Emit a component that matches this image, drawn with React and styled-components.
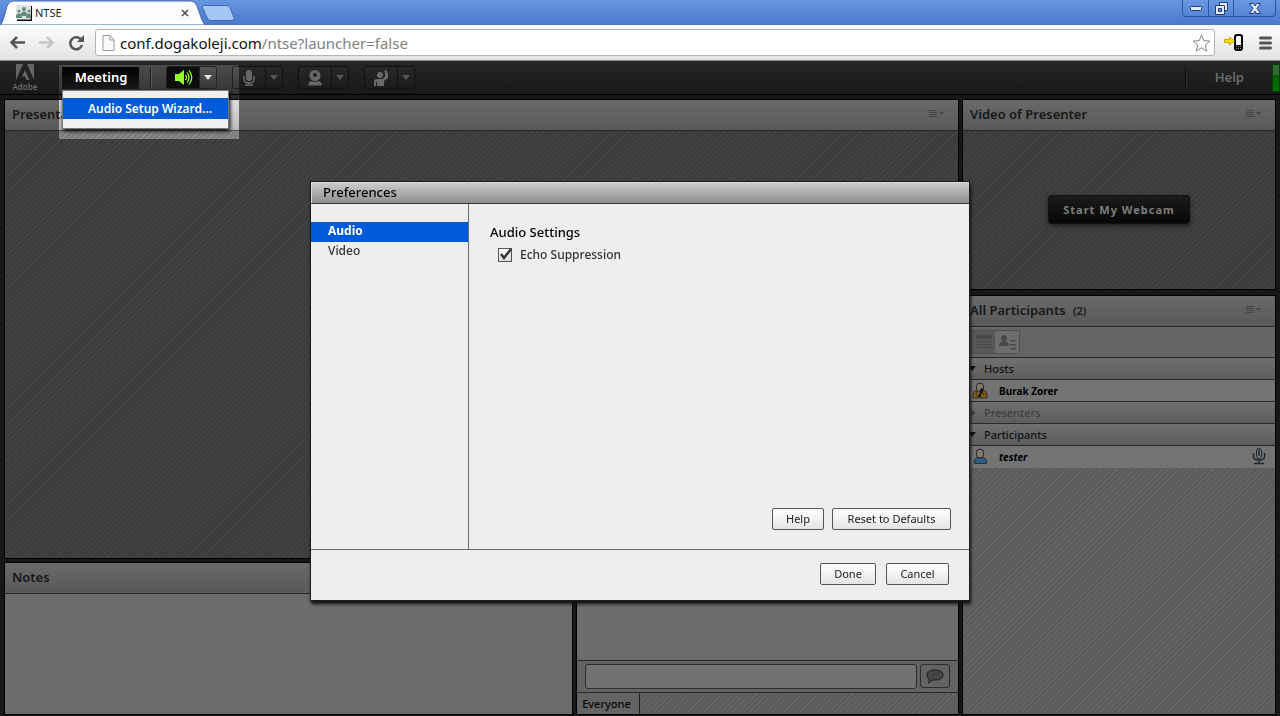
import React from 'react';
import styled, { createGlobalStyle, css } from 'styled-components';

const Global = createGlobalStyle`
  * { box-sizing: border-box; }
  body { margin: 0; background: #171717; font-family: "Noto Sans", "Open Sans", sans-serif; font-size: 12px; }
  button, input { font-family: inherit; margin: 0; }
  svg { display: block; flex: none; }
`;

const darkHatch = 'repeating-linear-gradient(135deg, #3c3c3c 0 3px, #454545 3px 4px)';
const lightHatch = 'repeating-linear-gradient(135deg, #5c5c5c 0 3px, #676767 3px 4px)';

const Page = styled.div`
  position: relative;
  min-height: 100vh;
  display: flex;
  flex-direction: column;
  overflow: hidden;
`;

const TabStrip = styled.div`
  height: 25px;
  display: flex;
  justify-content: space-between;
  background: linear-gradient(#6796e0, #4a78cd);
`;
const Tabs = styled.div`
  display: flex;
  align-items: stretch;
`;
const Tab = styled.div`
  position: relative;
  width: 201px;
  padding: 0 12px 0 16px;
  display: flex;
  align-items: center;
  gap: 3px;
  font-size: 11px;
  color: #222;
`;
const TabShape = styled.svg`
  position: absolute;
  inset: 0;
`;
const TabLabel = styled.span`
  position: relative;
  flex: 1;
`;
const Layered = styled.span`
  position: relative;
`;
const PlainButton = styled.button`
  position: relative;
  border: 0;
  padding: 0;
  background: none;
  display: flex;
  align-items: center;
  justify-content: center;
`;
const WindowControls = styled.div`
  display: flex;
  height: 17px;
  margin-right: 4px;
  border: 1px solid #2e549f;
  border-top: 0;
  border-radius: 0 0 4px 4px;
  background: linear-gradient(#6a98e2, #5684d5);
`;
const WindowButton = styled(PlainButton)`
  width: ${(p) => (p.$wide ? 42 : 25)}px;
  & + & { border-left: 1px solid #2e549f; }
`;

const AddressBar = styled.div`
  height: 36px;
  display: flex;
  align-items: center;
  padding: 0 8px;
  gap: 9px;
  background: linear-gradient(#fdfdfd, #e2e2e2);
  border-bottom: 1px solid #8d8d8d;
`;
const NavButtons = styled.div`
  display: flex;
  gap: 10px;
`;
const UrlBox = styled.div`
  flex: 1;
  height: 27px;
  display: flex;
  align-items: center;
  gap: 5px;
  padding: 0 3px 0 6px;
  background: #fff;
  border: 1px solid #b4b4b4;
  border-radius: 3px;
`;
const Url = styled.div`
  flex: 1;
  font-size: 15px;
  line-height: 20px;
  color: #808080;
  b { font-weight: 400; color: #111; }
`;
const Extras = styled.div`
  display: flex;
  gap: 15px;
  align-items: center;
`;

const AppBar = styled.header`
  position: relative;
  height: 34px;
  display: flex;
  align-items: center;
  background: linear-gradient(#252525, #191919);
  border-bottom: 1px solid #000;
`;
const Brand = styled.div`
  width: 50px;
  height: 28px;
  margin-right: 12px;
  display: flex;
  flex-direction: column;
  align-items: center;
  color: #6a6a6a;
  font-size: 8px;
  line-height: 11px;
  font-weight: 600;
`;
const MeetingButton = styled(PlainButton)`
  width: 77px;
  height: 22px;
  padding: 0 0 2px 1px;
  color: #858585;
  font-size: 13px;
  font-weight: 600;
  background: linear-gradient(#000, #0c0c0c);
`;
const Divider = styled.span`
  width: 2px;
  height: 20px;
  background: #0d0d0d;
  border-right: 1px solid #2c2c2c;
`;
const ToolGroup = styled.div`
  flex: 1;
  display: flex;
  gap: 15px;
  padding-left: 14px;
`;
const MenuGroup = styled.div`
  display: flex;
  align-items: center;
  gap: 11px;
`;
const StatusGroup = styled.div`
  display: flex;
  align-items: center;
  gap: 28px;
`;
const SplitButton = styled.div`
  display: flex;
  height: 23px;
  border: 1px solid #101010;
  border-radius: 3px;
  background: linear-gradient(#282828, #1b1b1b);
`;
const ToolButton = styled(PlainButton)`
  width: 32px;
  color: #686868;
  ${(p) => p.$on && css`background: #060606; color: #468a13;`}
`;
const ArrowButton = styled(PlainButton)`
  width: 17px;
  border-left: 1px solid #101010;
  color: ${(p) => (p.$on ? '#6c6c6c' : '#555')};
`;
const HelpMenu = styled(PlainButton)`
  padding-bottom: 2px;
  color: #6b6b6b;
  font-size: 13px;
  font-weight: 600;
`;
const Signal = styled.span`
  width: 8px;
  height: 28px;
  border: 1px solid #033c03;
  background: linear-gradient(#346834 0 40%, #006000 40%, #007000);
`;

const Spotlight = styled.div`
  position: absolute;
  left: 59px;
  top: 65px;
  width: 180px;
  height: 74px;
  padding: 25px 10px 10px 3px;
  backdrop-filter: brightness(2.1);
`;
const Menu = styled.div`
  height: 39px;
  padding: 7px 0;
  background: #f0f0f0;
  border: 1px solid #777;
  box-shadow: 1px 2px 4px #000;
`;
const MenuItem = styled.button`
  width: 100%;
  height: 21px;
  border: 0;
  padding: 0 0 1px 25px;
  background: #005bd8;
  color: #fff;
  font-size: 12px;
  font-weight: 600;
  text-align: left;
  white-space: nowrap;
`;

const Workspace = styled.main`
  flex: 1;
  display: grid;
  grid-template-columns: 1fr 314px;
  gap: 3px;
  padding: 4px 4px 1px 4px;
`;
const Column = styled.div`
  display: flex;
  flex-direction: column;
  gap: ${(p) => p.$gap}px;
`;
const BottomRow = styled.div`
  height: 153px;
  display: grid;
  grid-template-columns: 569fr 383fr;
  gap: 3px;
`;
const Pod = styled.section`
  display: flex;
  flex-direction: column;
  border: 1px solid #000;
  background: ${(p) => p.$fill};
  ${(p) => (p.$height ? css`height: ${p.$height}px;` : css`flex: 1;`)}
`;
const PodHeader = styled.div`
  height: 31px;
  display: flex;
  align-items: center;
  justify-content: space-between;
  padding: 0 14px 2px 7px;
  background: linear-gradient(#6a6a6a, #595959);
  border-bottom: 1px solid #262626;
  color: #171717;
`;
const PodTitle = styled.h2`
  margin: 0;
  font-size: 13px;
  font-weight: 600;
  small { font-size: 11px; margin-left: 4px; }
`;
const Center = styled.div`
  flex: 1;
  display: flex;
  justify-content: center;
  padding-top: 64px;
`;
const WebcamButton = styled.button`
  width: 142px;
  height: 29px;
  padding: 0 0 1px 0;
  border: 1px solid #111;
  border-radius: 3px;
  background: linear-gradient(#1b1b1b, #080808);
  box-shadow: 0 2px 4px #222;
  color: #7d7d7d;
  font-size: 11px;
  font-weight: 700;
  letter-spacing: 1px;
`;

const ViewBar = styled.div`
  height: 31px;
  padding: 3px 7px;
  background: #656565;
  border-bottom: 1px solid #262626;
`;
const ViewSwitch = styled.div`
  display: inline-flex;
  height: 24px;
  border: 1px solid #505050;
  border-radius: 2px;
`;
const ViewButton = styled(PlainButton)`
  width: 24px;
  color: #484848;
  background: ${(p) => (p.$on ? '#585858' : '#6e6e6e')};
`;
const GroupRow = styled.div`
  height: 22px;
  display: flex;
  align-items: center;
  gap: 8px;
  padding-left: 5px;
  font-size: 11px;
  font-weight: 500;
  color: ${(p) => (p.$muted ? '#3f3f3f' : '#111')};
  background: linear-gradient(#707070, #5d5d5d);
  border-bottom: 1px solid #292929;
`;
const PersonRow = styled.div`
  height: 22px;
  display: flex;
  align-items: center;
  gap: 11px;
  padding: 0 9px;
  color: #000;
  background: #737373;
  border-bottom: 1px solid ${(p) => (p.$last ? '#737373' : '#292929')};
`;
const PersonName = styled.span`
  flex: 1;
  font-size: 10px;
  font-weight: 700;
  font-style: ${(p) => (p.$italic ? 'italic' : 'normal')};
`;

const ChatLog = styled.div`
  flex: 1;
  background: #6c6c6c;
`;
const ChatEntry = styled.form`
  height: 33px;
  display: flex;
  gap: 3px;
  padding: 3px 8px;
  background: #636363;
  border-top: 1px solid #262626;
  border-bottom: 1px solid #262626;
`;
const ChatInput = styled.input`
  flex: 1;
  min-width: 0;
  height: 25px;
  border: 1px solid #2d2d2d;
  border-radius: 3px;
  background: #727272;
`;
const SendButton = styled(PlainButton)`
  width: 30px;
  height: 24px;
  border: 1px solid #2d2d2d;
  border-radius: 3px;
`;
const ChatTabs = styled.div`
  height: 21px;
  display: flex;
  background: ${lightHatch};
`;
const ChatTab = styled(PlainButton)`
  width: 63px;
  padding-right: 3px;
  background: #646464;
  border-right: 1px solid #222;
  color: #080808;
  font-size: 11px;
  font-weight: 500;
`;

const Overlay = styled.div`
  position: absolute;
  inset: 0;
  display: flex;
  justify-content: center;
  align-items: flex-start;
  padding-top: 181px;
`;
const Dialog = styled.div`
  width: 660px;
  border: 1px solid #1c1c1c;
  background: #eee;
  box-shadow: 1px 3px 3px #111;
`;
const DialogTitle = styled.h1`
  height: 22px;
  margin: 0;
  padding-left: 12px;
  background: linear-gradient(#cecece, #8e8e8e);
  border-bottom: 1px solid #333;
  box-shadow: inset 1px 1px #ddd;
  color: #000;
  font-size: 13px;
  line-height: 20px;
  font-weight: 500;
`;
const DialogBody = styled.div`
  height: 346px;
  display: grid;
  grid-template-columns: 158px 1fr;
  border-bottom: 1px solid #6b6b6b;
`;
const SideList = styled.nav`
  padding-top: 18px;
  border-right: 1px solid #6b6b6b;
`;
const SideItem = styled.a`
  display: block;
  height: 20px;
  padding-left: 17px;
  line-height: 18px;
  font-size: 12px;
  text-decoration: none;
  font-weight: ${(p) => (p.$on ? 700 : 500)};
  color: ${(p) => (p.$on ? '#fff' : '#333')};
  background: ${(p) => (p.$on ? '#005bd8' : 'none')};
`;
const Settings = styled.div`
  display: flex;
  flex-direction: column;
  padding: 18px 18px 19px 21px;
`;
const SettingsTitle = styled.h2`
  margin: 0;
  font-size: 13px;
  line-height: 20px;
  font-weight: 500;
  color: #000;
`;
const CheckLabel = styled.label`
  flex: 1;
  display: flex;
  align-items: flex-start;
  gap: 8px;
  padding: 4px 0 0 8px;
  font-size: 12px;
  line-height: 18px;
  font-weight: 500;
  color: #333;
`;
const CheckBox = styled.input`
  appearance: none;
  width: 14px;
  height: 14px;
  margin-top: 2px;
  border: 1px solid #555;
  background: linear-gradient(#fff, #ddd);
`;
const CheckWrap = styled.span`
  position: relative;
  display: flex;
  svg { position: absolute; left: 0; top: 0; pointer-events: none; }
`;
const Buttons = styled.div`
  display: flex;
  justify-content: flex-end;
  gap: ${(p) => p.$gap}px;
`;
const DialogFooter = styled.div`
  height: 50px;
  padding: 13px 20px;
`;
const DialogButton = styled.button`
  width: ${(p) => p.$width}px;
  height: 22px;
  padding: 0 0 1px 0;
  border: 1px solid #555;
  border-radius: 2px;
  background: linear-gradient(#fff, #e4e4e4);
  color: #222;
  font-size: 11px;
  line-height: 18px;
  white-space: nowrap;
`;

const DownArrow = ({ width = 8, height = 5 }) => (
  <svg width={width} height={height} viewBox="0 0 8 5"><path d="M0 0h8L4 5z" fill="currentColor" /></svg>
);

const OptionsButton = () => (
  <PlainButton aria-label="Pod options">
    <svg width="15" height="8" viewBox="0 0 15 8" fill="none" stroke="#464646">
      <path d="M0 .5h8M0 2.500h8M0 4.500h8M0 6.500h8" />
      <path d="M10 2h5l-2.500 3z" fill="#464646" stroke="none" />
    </svg>
  </PlainButton>
);

const SpeakerIcon = () => (
  <svg width="19" height="17" viewBox="0 0 19 17" fill="currentColor">
    <path d="M1 5h4l5-4v15l-5-4H1z" />
    <path d="M11.500 6q2 2.500 0 5M13 3.500q4 5 0 10M15 1.500q5.500 7 0 14" fill="none" stroke="currentColor" strokeWidth="1.200" />
  </svg>
);
const MicIcon = () => (
  <svg width="12" height="16" viewBox="0 0 12 16" fill="none" stroke="currentColor">
    <rect x="3" y="0" width="6" height="11" rx="3" fill="currentColor" stroke="none" />
    <path d="M1 6v3q0 4 5 4t5-4V6M6 12v3M2 15h8" strokeWidth="1.500" />
  </svg>
);
const CamIcon = () => (
  <svg width="14" height="16" viewBox="0 0 14 16">
    <path fillRule="evenodd" d="M7 0a5 5 0 1 1 0 11A5 5 0 0 1 7 0zm0 3a2 2 0 1 0 0 4 2 2 0 0 0 0-4zM3 11l4 1 4-1 2.500 2v2.500H.5V13z" fill="currentColor" />
  </svg>
);
const HandIcon = () => (
  <svg width="16" height="16" viewBox="0 0 16 16" fill="currentColor">
    <circle cx="7" cy="5" r="3" />
    <path d="M1 16v-4q0-3 3-3h5l3-2V3l-1-2q2-1.500 3 0l1 3v4l-4 3v5H4v-4H3v4z" />
  </svg>
);
const PersonIcon = ({ body, host }) => (
  <svg width="16" height="17" viewBox="0 0 16 17">
    <path d={host ? 'M1 16v-4q1-4 5-4h4q4 0 5 4v4z' : 'M2.500 15.500v-3q1-3 4-3h4q3 0 4 3v3z'} fill={body} stroke="#2c2c2c" />
    <rect x="4.500" y="1" width="7" height="9" rx="3.500" fill="#817a6e" stroke="#222" />
    {host && <path d="M8 7l3-1v5l-2 1v3H5l3-4z" fill="#161616" />}
    {host && <path d="M4.500 9.500L4 14M11.500 11l.5 3" stroke="#403010" />}
  </svg>
);

const tools = [
  { label: 'Speakers', icon: <SpeakerIcon />, on: true },
  { label: 'Microphone', icon: <MicIcon /> },
  { label: 'Webcam', icon: <CamIcon /> },
  { label: 'Raise hand', icon: <HandIcon /> },
];

function Browser() {
  return (
    <>
      <TabStrip>
        <Tabs>
          <Tab>
            <TabShape width="206" height="25" viewBox="0 0 206 25">
              <path d="M0 25Q2 24 4 17L7 6Q9 1 13 1h178q4 0 6 5l5 14q2 5 4 5z" fill="#fcfcfc" stroke="#4167ad" strokeWidth="1" />
            </TabShape>
            <Layered>
              <svg width="16" height="16" viewBox="0 0 16 16">
                <path d="M1 15.500h14.500V1" fill="none" stroke="#000" strokeWidth="2" />
                <rect width="15" height="14" fill="#dfe7e3" />
                <g fill="#648b7e"><circle cx="8" cy="4" r="2" /><circle cx="3" cy="6" r="1.500" /><circle cx="13" cy="6" r="1.500" /><path d="M5 11V8l3-2 3 2v3zM0 13v-3l3-2 3 2v3zM10 13v-3l3-2 2 2v3z" /></g>
              </svg>
            </Layered>
            <TabLabel>NTSE</TabLabel>
            <PlainButton aria-label="Close tab">
              <svg width="8" height="8" viewBox="0 0 8 8"><path d="M1 1l6 6M7 1L1 7" stroke="#555" strokeWidth="1.700" /></svg>
            </PlainButton>
          </Tab>
          <PlainButton aria-label="New tab">
            <svg width="34" height="25" viewBox="0 0 34 25"><path d="M1.500 7.500Q1 5.500 3 5.500h22q3 0 4 2l4 10q1 3-2 3H10q-3 0-4-3z" fill="#a5c7f7" stroke="#4266ad" /></svg>
          </PlainButton>
        </Tabs>
        <WindowControls>
          <WindowButton aria-label="Minimize">
            <svg width="12" height="5" viewBox="0 0 12 5"><rect x=".5" y=".5" width="11" height="4" rx="1" fill="#dfe9fa" stroke="#233f78" /></svg>
          </WindowButton>
          <WindowButton aria-label="Restore">
            <svg width="13" height="13" viewBox="0 0 13 13" fill="#dfe9fa" stroke="#233f78"><path d="M4.500.5h8v8h-8z" /><path d="M.5 3.500h9v9h-9z" /><path d="M3.500 6.500h3v3h-3z" fill="#5b88d6" /></svg>
          </WindowButton>
          <WindowButton $wide aria-label="Close">
            <svg width="12" height="11" viewBox="0 0 12 11"><path d="M.5.5h4L6 3 7.500.5h4l-3.500 5 3.500 5h-4L6 8l-1.500 2.500h-4l3.500-5z" fill="#dfe9fa" stroke="#233f78" /></svg>
          </WindowButton>
        </WindowControls>
      </TabStrip>
      <AddressBar>
        <NavButtons>
          <PlainButton aria-label="Back">
            <svg width="19" height="16" viewBox="0 0 19 16"><path d="M9 2L3.500 7.500 9 13M3.500 7.500H17" fill="none" stroke="#555" strokeWidth="2.500" /></svg>
          </PlainButton>
          <PlainButton aria-label="Forward">
            <svg width="19" height="16" viewBox="0 0 19 16"><path d="M10 2l5.500 5.500L10 13M15.500 7.500H2" fill="none" stroke="#c6c6c6" strokeWidth="2.500" /></svg>
          </PlainButton>
          <PlainButton aria-label="Reload">
            <svg width="20" height="18" viewBox="0 0 20 18"><path d="M16 11a6 6 0 1 1-1.500-6" fill="none" stroke="#555" strokeWidth="2.500" /><path d="M18 1v7h-7z" fill="#555" /></svg>
          </PlainButton>
        </NavButtons>
        <UrlBox>
          <svg width="13" height="16" viewBox="0 0 13 16"><path d="M1 .5h7L12 5v10.500H1zM8 .5V5h4" fill="#fafafa" stroke="#999" /></svg>
          <Url><b>conf.dogakoleji.com</b>/ntse?launcher=false</Url>
          <PlainButton aria-label="Bookmark">
            <svg width="19" height="18" viewBox="0 0 19 18"><path d="M9.500 1l2.300 5.700 6.200.4-4.800 4 1.600 6-5.300-3.300L4.200 17l1.600-6L1 7.100l6.200-.4z" fill="#fff" stroke="#858585" /></svg>
          </PlainButton>
        </UrlBox>
        <Extras>
          <PlainButton aria-label="Send to phone">
            <svg width="20" height="18" viewBox="0 0 20 18">
              <rect x="11" y="1" width="7" height="15" rx="2" fill="#fff" stroke="#000" strokeWidth="2" />
              <path d="M11 11h7v5h-7z" /><path d="M12 12.500h5M12 14.500h5" stroke="#999" strokeDasharray="1 1" />
              <path d="M.5 5.500h5V3l5 4-5 4V8.500h-5z" fill="#ffdf14" stroke="#c9a60a" />
            </svg>
          </PlainButton>
          <PlainButton aria-label="Browser menu">
            <svg width="13" height="14" viewBox="0 0 13 14"><path d="M1.500 2h10M1.500 7h10M1.500 12h10" stroke="#555" strokeWidth="3" strokeLinecap="round" /></svg>
          </PlainButton>
        </Extras>
      </AddressBar>
    </>
  );
}

function Participants() {
  return (
    <Pod $fill={lightHatch}>
      <PodHeader><PodTitle>All Participants <small>(2)</small></PodTitle><OptionsButton /></PodHeader>
      <ViewBar>
        <ViewSwitch>
          <ViewButton $on aria-label="Attendee view">
            <svg width="17" height="16" viewBox="0 0 17 16" fill="currentColor"><path d="M1 1h16v4H1zM1 7h2v1H1zM4 7h13v1H4zM1 10h2v1H1zM4 10h13v1H4zM1 13h2v1H1zM4 13h13v1H4z" /></svg>
          </ViewButton>
          <ViewButton aria-label="Status view">
            <svg width="17" height="15" viewBox="0 0 17 15" fill="currentColor"><circle cx="5" cy="3" r="3" /><path d="M0 11q0-4 4-5h2q4 1 4 5zM11 5h6v1.500h-6zM11 9h6v1.500h-6zM11 13h6v1.500h-6z" /></svg>
          </ViewButton>
        </ViewSwitch>
      </ViewBar>
      <GroupRow><DownArrow />Hosts</GroupRow>
      <PersonRow><PersonIcon body="#856315" host /><PersonName>Burak Zorer</PersonName></PersonRow>
      <GroupRow $muted><svg width="8" height="8" viewBox="0 0 8 8"><path d="M3 0l5 4-5 4z" fill="#444" /></svg>Presenters</GroupRow>
      <GroupRow><DownArrow />Participants</GroupRow>
      <PersonRow $last>
        <PersonIcon body="#2f5c86" />
        <PersonName $italic>tester</PersonName>
        <svg width="14" height="17" viewBox="0 0 14 17" fill="none" stroke="#1c2730"><rect x="4.500" y=".5" width="5" height="10" rx="2.500" fill="#777" /><path d="M6 3h2M6 5h2M6 7h2M1.500 5v4q0 3 5.500 3t5.500-3V5M7 12v3M2 15.500h10" strokeWidth="1.500" /></svg>
      </PersonRow>
    </Pod>
  );
}

function Preferences() {
  return (
    <Dialog role="dialog" aria-labelledby="prefs-title">
      <DialogTitle id="prefs-title">Preferences</DialogTitle>
      <DialogBody>
        <SideList>
          <SideItem $on href="#audio">Audio</SideItem>
          <SideItem href="#video">Video</SideItem>
        </SideList>
        <Settings>
          <SettingsTitle>Audio Settings</SettingsTitle>
          <CheckLabel>
            <CheckWrap>
              <CheckBox type="checkbox" defaultChecked />
              <svg width="16" height="16" viewBox="0 0 16 16"><path d="M3 8l3 4L13 3" fill="none" stroke="#333" strokeWidth="2.500" /></svg>
            </CheckWrap>
            Echo Suppression
          </CheckLabel>
          <Buttons $gap={8}>
            <DialogButton $width={52}>Help</DialogButton>
            <DialogButton $width={119}>Reset to Defaults</DialogButton>
          </Buttons>
        </Settings>
      </DialogBody>
      <DialogFooter>
        <Buttons $gap={10}>
          <DialogButton $width={56}>Done</DialogButton>
          <DialogButton $width={63}>Cancel</DialogButton>
        </Buttons>
      </DialogFooter>
    </Dialog>
  );
}

export default function App() {
  return (
    <Page>
      <Global />
      <Browser />
      <AppBar>
        <Brand>
          <svg width="18" height="17" viewBox="0 0 18 17" fill="#666"><path d="M0 0h7L0 16zM11 0h7v16zM9 6l4.500 10h-3L9 12.500H6z" /></svg>
          Adobe
        </Brand>
        <MenuGroup>
          <MeetingButton>Meeting</MeetingButton>
          <Divider />
        </MenuGroup>
        <ToolGroup>
          {tools.map((t) => (
            <SplitButton key={t.label}>
              <ToolButton $on={t.on} aria-label={t.label}>{t.icon}</ToolButton>
              <ArrowButton $on={t.on} aria-label={`${t.label} options`}><DownArrow /></ArrowButton>
            </SplitButton>
          ))}
        </ToolGroup>
        <StatusGroup>
          <Divider />
          <HelpMenu>Help</HelpMenu>
          <Signal />
        </StatusGroup>
      </AppBar>
      <Workspace>
        <Column $gap={3}>
          <Pod $fill={darkHatch}>
            <PodHeader><PodTitle>Presentation</PodTitle><OptionsButton /></PodHeader>
          </Pod>
          <BottomRow>
            <Pod $fill="#6c6c6c"><PodHeader><PodTitle>Notes</PodTitle></PodHeader></Pod>
            <Pod $fill="#6c6c6c">
              <PodHeader><PodTitle>Chat</PodTitle></PodHeader>
              <ChatLog />
              <ChatEntry>
                <ChatInput aria-label="Message" />
                <SendButton type="button" aria-label="Send message">
                  <svg width="18" height="15" viewBox="0 0 18 15"><path d="M9 1c5 0 8 2 8 5s-3 5-8 5l-3 0q-1 2-4 3 2-2 1-4Q1 9 1 6c0-3 3-5 8-5z" fill="#444" stroke="#1c1c1c" /></svg>
                </SendButton>
              </ChatEntry>
              <ChatTabs><ChatTab>Everyone</ChatTab></ChatTabs>
            </Pod>
          </BottomRow>
        </Column>
        <Column $gap={5}>
          <Pod $fill={darkHatch} $height={191}>
            <PodHeader><PodTitle>Video of Presenter</PodTitle><OptionsButton /></PodHeader>
            <Center><WebcamButton>Start My Webcam</WebcamButton></Center>
          </Pod>
          <Participants />
        </Column>
      </Workspace>
      <Spotlight>
        <Menu><MenuItem>Audio Setup Wizard...</MenuItem></Menu>
      </Spotlight>
      <Overlay><Preferences /></Overlay>
    </Page>
  );
}
